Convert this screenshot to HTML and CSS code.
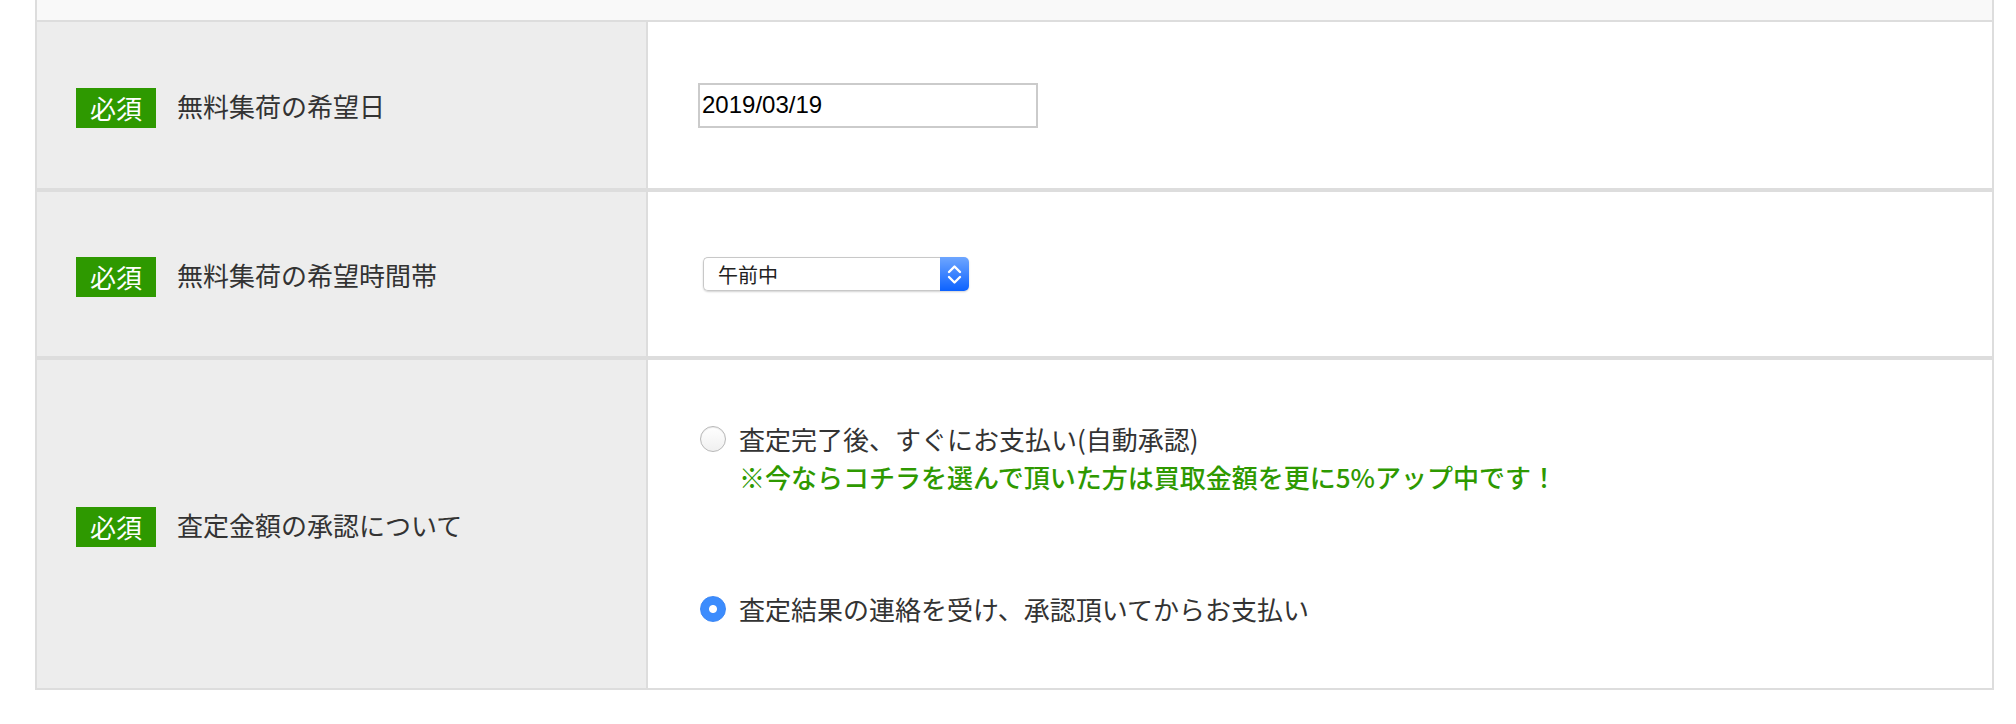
FILE: index.html
```html
<!DOCTYPE html>
<html lang="ja">
<head>
    <meta charset="UTF-8">
    <meta name="viewport" content="width=device-width, initial-scale=1.0">
    <title>無料集荷のお申し込み</title>
    <link rel="stylesheet" href="styles.css">
</head>
<body>
    <div class="form-table">
        <div class="form-top"></div>

        <div class="form-row row-date">
            <div class="form-label"><span class="req">必須</span>無料集荷の希望日</div>
            <div class="form-value">
                <input type="text" class="date-input" value="2019/03/19">
            </div>
        </div>

        <div class="form-row row-time">
            <div class="form-label"><span class="req">必須</span>無料集荷の希望時間帯</div>
            <div class="form-value">
                <div class="select-wrap">
                    <select class="time-select">
                        <option>午前中</option>
                        <option>12時〜14時</option>
                        <option>14時〜16時</option>
                        <option>16時〜18時</option>
                        <option>18時〜21時</option>
                    </select>
                    <span class="select-arrow">
                        <svg width="29" height="34" viewBox="0 0 29 34">
                            <path d="M9 15 L14.5 9.5 L20 15" fill="none" stroke="#fff" stroke-width="2.4" stroke-linecap="round" stroke-linejoin="round"/>
                            <path d="M9 20 L14.5 25.5 L20 20" fill="none" stroke="#fff" stroke-width="2.4" stroke-linecap="round" stroke-linejoin="round"/>
                        </svg>
                    </span>
                </div>
            </div>
        </div>

        <div class="form-row row-approve">
            <div class="form-label"><span class="req">必須</span>査定金額の承認について</div>
            <div class="form-value options">
                <label class="option">
                    <input type="radio" name="approve" class="radio">
                    査定完了後、すぐにお支払い(自動承認)
                </label>
                <p class="option-note">※今ならコチラを選んで頂いた方は買取金額を更に5%アップ中です！</p>
                <label class="option option-second">
                    <input type="radio" name="approve" class="radio" checked>
                    査定結果の連絡を受け、承認頂いてからお支払い
                </label>
            </div>
        </div>
    </div>
</body>
</html>
```

FILE: styles.css
```css
body {
    margin: 0;
    background-color: #fff;
    font-family: "Noto Sans CJK JP", "Noto Sans", sans-serif;
    color: #333;
}
.form-table {
    width: 1959px;
    margin-left: 35px;
    box-sizing: border-box;
    border-left: 2px solid #ddd;
    border-right: 2px solid #ddd;
    border-bottom: 2px solid #ddd;
}
.form-top {
    height: 20px;
    background-color: #f9f9f9;
    border-bottom: 2px solid #ddd;
}
.form-row {
    display: grid;
    grid-template-columns: 611px 1fr;
}
.form-row + .form-row {
    border-top: 4px solid #ddd;
}
.row-date {
    height: 166px;
}
.row-time {
    height: 164px;
}
.form-label {
    display: flex;
    align-items: center;
    box-sizing: border-box;
    padding-left: 39px;
    background-color: #ededed;
    border-right: 2px solid #ddd;
    font-size: 26px;
}
.req {
    display: inline-block;
    width: 80px;
    height: 40px;
    margin-top: 6px;
    margin-right: 21px;
    background-color: #2e9900;
    color: #fff;
    font-size: 26px;
    line-height: 40px;
    text-align: center;
}
.form-value {
    display: flex;
    align-items: center;
    padding-left: 50px;
}
.date-input {
    width: 340px;
    height: 45px;
    box-sizing: border-box;
    margin: 0;
    padding: 0 0 0 2px;
    border: 2px solid #cbcbcb;
    font-family: "Liberation Sans", Arial, sans-serif;
    font-size: 24px;
    color: #000;
    outline: none;
}
.select-wrap {
    display: inline-flex;
    height: 34px;
    margin-left: 5px;
    border-radius: 5px;
    box-shadow: 0 1px 2px rgba(0, 0, 0, 0.18);
}
.time-select {
    appearance: none;
    -webkit-appearance: none;
    width: 237px;
    height: 34px;
    box-sizing: border-box;
    margin: 0;
    padding: 0 0 0 14px;
    border: 1px solid #c8c8c8;
    border-right: none;
    border-radius: 5px 0 0 5px;
    background-color: #fff;
    font-family: "Noto Sans CJK JP", sans-serif;
    font-size: 20px;
    color: #222;
    outline: none;
}
.select-arrow {
    display: block;
    width: 29px;
    height: 34px;
    border-radius: 0 5px 5px 0;
    background: linear-gradient(#6ea6ff, #0c62ff);
}
.select-arrow svg {
    display: block;
}
.options {
    flex-direction: column;
    align-items: flex-start;
    justify-content: center;
    padding: 60px 0 60px 50px;
}
.option {
    display: flex;
    align-items: center;
    gap: 13px;
    font-size: 26px;
    line-height: 38px;
    cursor: pointer;
}
.option-second {
    margin-top: 94px;
}
.option-note {
    margin: 0 0 0 41px;
    color: #2e9900;
    font-size: 26px;
    font-weight: 500;
    line-height: 38px;
}
.radio {
    appearance: none;
    -webkit-appearance: none;
    width: 26px;
    height: 26px;
    margin: 0 0 0 2px;
    border: 1px solid #b8b8b8;
    border-radius: 50%;
    background: linear-gradient(#fff, #f0f0f0);
    box-shadow: inset 0 1px 1px rgba(0, 0, 0, 0.08);
    box-sizing: border-box;
}
.radio:checked {
    border-color: #3a86f5;
    background: radial-gradient(circle, #fff 0 3.5px, #3c8cfd 4.5px);
    box-shadow: none;
}
```
